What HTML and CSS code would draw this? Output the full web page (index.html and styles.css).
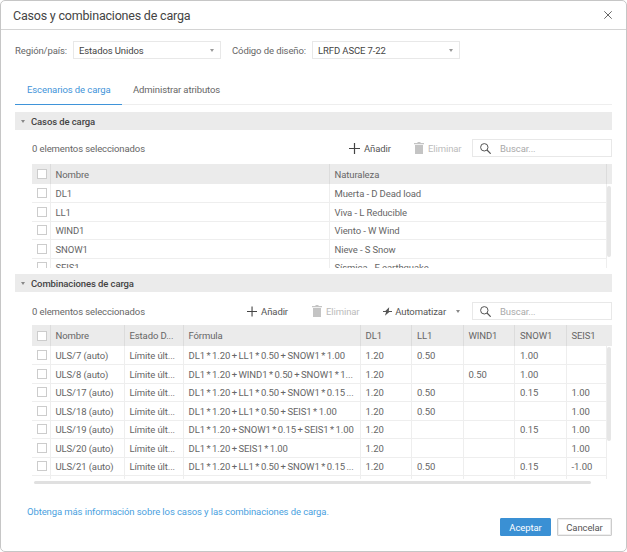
FILE: index.html
```html
<!DOCTYPE html>
<html lang="es">
<head>
<meta charset="utf-8">
<title>Casos y combinaciones de carga</title>
<link rel="stylesheet" href="styles.css">
</head>
<body>
<div class="dialog">
  <header class="dlg-head">
    <h1 class="dlg-title">Casos y combinaciones de carga</h1>
    <svg class="close" width="8" height="8" viewBox="0 0 8 8"><path d="M.3.3l7.400 7.400M7.700.3L.3 7.700" stroke="#555" stroke-width=".9" fill="none"/></svg>
  </header>

  <div class="filters">
    <label class="flabel">Región/país:</label>
    <div class="select sel-a"><span>Estados Unidos</span><i class="caret"></i></div>
    <label class="flabel flabel-b">Código de diseño:</label>
    <div class="select sel-b"><span>LRFD ASCE 7-22</span><i class="caret"></i></div>
  </div>

  <nav class="tabs">
    <span class="tab active">Escenarios de carga</span>
    <span class="tab">Administrar atributos</span>
  </nav>

  <section class="sec">
    <div class="sec-head"><i class="caret dark"></i>Casos de carga</div>
    <div class="toolbar">
      <span class="count">0 elementos seleccionados</span>
      <span class="tool add"><svg width="11" height="11" viewBox="0 0 11 11"><path d="M5.500 0v11M0 5.500h11" stroke="#444" stroke-width="1.200" fill="none"/></svg>Añadir</span>
      <span class="tool off del"><svg width="10" height="12" viewBox="0 0 10 12"><path d="M3.500 0h3v1H10v1.300H0V1h3.500zM1 3h8v9H1z" fill="#c4c4c4"/></svg>Eliminar</span>
      <div class="search"><svg width="11" height="11" viewBox="0 0 11 11"><circle cx="4.300" cy="4.300" r="3.700" stroke="#555" fill="none"/><path d="M7 7l3.700 3.700" stroke="#555" stroke-width="1.200"/></svg><span>Buscar...</span></div>
    </div>
    <div class="grid-wrap g1">
      <table class="grid">
        <colgroup><col class="c-chk"><col class="c-a"><col class="c-b"><col class="c-st"></colgroup>
        <thead><tr><th><i class="chk"></i></th><th>Nombre</th><th>Naturaleza</th><th class="st"></th></tr></thead>
        <tbody>
          <tr><td><i class="chk"></i></td><td>DL1</td><td>Muerta - D Dead load</td><td class="st"></td></tr>
          <tr><td><i class="chk"></i></td><td>LL1</td><td>Viva - L Reducible</td><td class="st"></td></tr>
          <tr><td><i class="chk"></i></td><td>WIND1</td><td>Viento - W Wind</td><td class="st"></td></tr>
          <tr><td><i class="chk"></i></td><td>SNOW1</td><td>Nieve - S Snow</td><td class="st"></td></tr>
          <tr><td><i class="chk"></i></td><td>SEIS1</td><td>Sísmica - E earthquake</td><td class="st"></td></tr>
        </tbody>
      </table>
      <i class="vbar vb1"></i>
    </div>
  </section>

  <section class="sec sec2">
    <div class="sec-head"><i class="caret dark"></i>Combinaciones de carga</div>
    <div class="toolbar">
      <span class="count">0 elementos seleccionados</span>
      <span class="tool add add2"><svg width="11" height="11" viewBox="0 0 11 11"><path d="M5.500 0v11M0 5.500h11" stroke="#444" stroke-width="1.200" fill="none"/></svg>Añadir</span>
      <span class="tool off del del2"><svg width="10" height="12" viewBox="0 0 10 12"><path d="M3.500 0h3v1H10v1.300H0V1h3.500zM1 3h8v9H1z" fill="#c4c4c4"/></svg>Eliminar</span>
      <span class="tool auto"><svg width="12" height="11" viewBox="0 0 12 11"><path d="M8 0L3 4.800H0v1.400h4L2.500 11l5.700-4.700H12V5H7.500z" fill="#555"/></svg>Automatizar<i class="caret dark auto-caret"></i></span>
      <div class="search"><svg width="11" height="11" viewBox="0 0 11 11"><circle cx="4.300" cy="4.300" r="3.700" stroke="#555" fill="none"/><path d="M7 7l3.700 3.700" stroke="#555" stroke-width="1.200"/></svg><span>Buscar...</span></div>
    </div>
    <div class="grid-wrap g2">
      <table class="grid">
        <colgroup><col class="c-chk"><col class="c-n"><col class="c-e"><col class="c-f"><col class="c-v"><col class="c-v"><col class="c-v"><col class="c-v"><col class="c-s"><col class="c-st"></colgroup>
        <thead class="tall"><tr><th><i class="chk"></i></th><th>Nombre</th><th>Estado D...</th><th>Fórmula</th><th>DL1</th><th>LL1</th><th>WIND1</th><th>SNOW1</th><th>SEIS1</th><th class="st none"></th></tr></thead>
        <tbody>
          <tr><td><i class="chk"></i></td><td>ULS/7 (auto)</td><td>Límite últ...</td><td class="fx">DL1 * 1.20 + LL1 * 0.50 + SNOW1 * 1.00</td><td>1.20</td><td>0.50</td><td></td><td>1.00</td><td></td><td class="st"></td></tr>
          <tr><td><i class="chk"></i></td><td>ULS/8 (auto)</td><td>Límite últ...</td><td class="fx">DL1 * 1.20 + WIND1 * 0.50 + SNOW1 * 1...</td><td>1.20</td><td></td><td>0.50</td><td>1.00</td><td></td><td class="st"></td></tr>
          <tr><td><i class="chk"></i></td><td>ULS/17 (auto)</td><td>Límite últ...</td><td class="fx">DL1 * 1.20 + LL1 * 0.50 + SNOW1 * 0.15 ...</td><td>1.20</td><td>0.50</td><td></td><td>0.15</td><td>1.00</td><td class="st"></td></tr>
          <tr><td><i class="chk"></i></td><td>ULS/18 (auto)</td><td>Límite últ...</td><td class="fx">DL1 * 1.20 + LL1 * 0.50 + SEIS1 * 1.00</td><td>1.20</td><td>0.50</td><td></td><td></td><td>1.00</td><td class="st"></td></tr>
          <tr><td><i class="chk"></i></td><td>ULS/19 (auto)</td><td>Límite últ...</td><td class="fx">DL1 * 1.20 + SNOW1 * 0.15 + SEIS1 * 1.00</td><td>1.20</td><td></td><td></td><td>0.15</td><td>1.00</td><td class="st"></td></tr>
          <tr><td><i class="chk"></i></td><td>ULS/20 (auto)</td><td>Límite últ...</td><td class="fx">DL1 * 1.20 + SEIS1 * 1.00</td><td>1.20</td><td></td><td></td><td></td><td>1.00</td><td class="st"></td></tr>
          <tr><td><i class="chk"></i></td><td>ULS/21 (auto)</td><td>Límite últ...</td><td class="fx">DL1 * 1.20 + LL1 * 0.50 + SNOW1 * 0.15 ...</td><td>1.20</td><td>0.50</td><td></td><td>0.15</td><td>-1.00</td><td class="st"></td></tr>
          <tr><td></td><td></td><td></td><td></td><td></td><td></td><td></td><td></td><td></td><td class="st"></td></tr>
        </tbody>
      </table>
      <i class="vbar vb2"></i>
    </div>
    <div class="hbar"></div>
  </section>

  <footer class="foot">
    <a class="link" href="#">Obtenga más información sobre los casos y las combinaciones de carga.</a>
    <div class="btns">
      <button class="btn primary">Aceptar</button>
      <button class="btn cancel">Cancelar</button>
    </div>
  </footer>
</div>
</body>
</html>
```

FILE: styles.css
```css
* { box-sizing: border-box; }
html, body { margin: 0; padding: 0; }
body { width: 627px; height: 552px; background: #fff; font-family: Roboto, sans-serif; font-size: 9.500px; letter-spacing: -.1px; color: #666; overflow: hidden; }
.dialog { width: 627px; height: 552px; border: 1px solid #c6c6c6; border-radius: 5px; padding: 0 14px; position: relative; background: #fff; }

.dlg-head { height: 29px; margin: 0 -14px; padding: 0 14px 0 12px; border-bottom: 1px solid #d4d4d4; display: flex; align-items: center; justify-content: space-between; }
.dlg-title { margin: 0; font-size: 12.500px; font-weight: 400; letter-spacing: -.2px; color: #444; }

.filters { display: flex; align-items: center; height: 18px; margin-top: 11px; white-space: nowrap; }
.flabel { color: #666; width: 58px; }
.flabel-b { margin-left: 11px; width: 80px; }
.select { height: 18px; border: 1px solid #e8e8e8; display: flex; align-items: center; justify-content: space-between; padding: 0 6px 0 5px; color: #444; }
.sel-a { width: 148px; }
.sel-b { width: 148px; }
.caret { width: 0; height: 0; border: 2.500px solid transparent; border-top: 3px solid #999; border-bottom: 0; display: block; }
.caret.dark { border-top-color: #888; }

.tabs { display: flex; height: 28px; margin-top: 18px; border-bottom: 1px solid #eee; }
.tab { padding: 0 12px; line-height: 25px; color: #666; white-space: nowrap; width: 107px; }
.tab + .tab { width: auto; margin-left: -1px; }
.tab.active { color: #3f94d9; border-bottom: 1px solid #3f94d9; height: 28px; }

.sec { margin-top: 7px; }
.sec2 { margin-top: 6px; }
.sec-head { height: 18px; background: #ebebeb; display: flex; align-items: center; padding-left: 6px; font-weight: 500; color: #444; gap: 6px; }
.toolbar { display: flex; align-items: center; height: 18px; margin-top: 9px; padding-left: 17px; white-space: nowrap; }
.sec2 .toolbar { margin-top: 10px; }
.count { flex: 1; }
.tool { display: inline-flex; align-items: center; gap: 4px; color: #555; }
.off { color: #bbb; }
.add { width: 42px; margin-right: 23px; }
.del { width: 49px; margin-right: 9px; }
.add2 { width: 41px; margin-right: 24px; }
.del2 { width: 48px; margin-right: 23px; }
.auto { width: 77px; margin-right: 12px; gap: 3px; }
.auto-caret { margin-left: 7px; }
.search { width: 140px; height: 18px; border: 1px solid #e8e8e8; display: flex; align-items: center; gap: 9px; padding-left: 7px; color: #aaa; }

.grid-wrap { margin: 7px 0 0 17px; position: relative; overflow: hidden; }
.g1 { height: 104px; }
.g2 { height: 154px; margin-top: 5px; }
.grid { width: 580px; table-layout: fixed; border-collapse: collapse; }
.c-chk { width: 18px; }
.c-a { width: 279px; }
.c-b { width: 277px; }
.c-st { width: 6px; }
.c-n { width: 74px; }
.c-e { width: 59px; }
.c-f { width: 177px; }
.c-v { width: 51.500px; }
.c-s { width: 40px; }
.grid th, .grid td { padding: 0 5px; font-weight: 400; text-align: left; white-space: nowrap; overflow: hidden; color: #666; }
.grid th { height: 20px; background: #ebebeb; border-left: 1px solid #dcdcdc; }
.tall th { height: 21px; }
.grid td { height: 18.500px; padding-top: 1px; border-left: 1px solid #eee; border-bottom: 1px solid #eee; }
.grid td.fx { word-spacing: -.7px; }
.grid td.st { border-bottom: 0; }
.grid th.st.none { border-left: 0; }
.grid th:first-child, .grid td:first-child { border-left: 0; padding: 0 0 0 5px; }
.chk { display: block; width: 10px; height: 10px; border: 1px solid #ccc; background: #fff; }

.vbar { position: absolute; background: #e6e6e6; border-radius: 2px; width: 4px; }
.vb1 { right: 1px; top: 22px; height: 71px; }
.vb2 { right: 1px; top: 22px; height: 94px; }
.hbar { height: 3px; width: 557px; margin: 2px 0 0 19px; background: #e0e0e0; border-radius: 2px; }

.foot { position: relative; margin: 0 0 0 12px; height: 40px; }
.link { color: #4a9fe0; text-decoration: none; position: absolute; top: 22px; left: 0; }
.btns { position: absolute; right: 0; top: 34px; display: flex; gap: 6px; }
.btn { width: 51px; height: 18px; font: inherit; letter-spacing: inherit; color: #555; background: #fff; border: 1px solid #ccc; border-radius: 1px; padding: 0; }
.cancel { width: 55px; box-shadow: inset 0 0 0 1px #eee; }
.primary { background: #3a90d4; color: #fff; border-color: #3a90d4; }
```
